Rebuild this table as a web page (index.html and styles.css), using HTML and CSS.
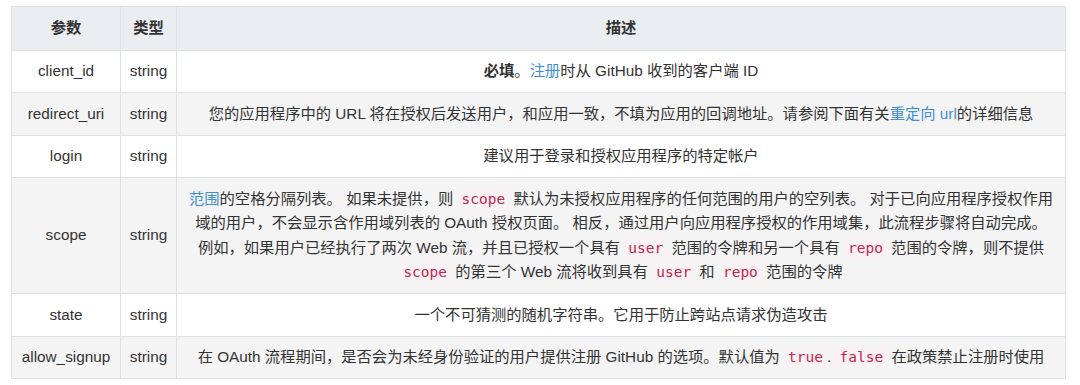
FILE: index.html
```html
<!DOCTYPE html>
<html lang="zh-CN">
<head>
<meta charset="utf-8">
<title>OAuth 参数</title>
<link rel="stylesheet" href="styles.css">
</head>
<body>
<table class="params">
  <thead>
    <tr>
      <th class="c-name">参数</th>
      <th class="c-type">类型</th>
      <th class="c-desc">描述</th>
    </tr>
  </thead>
  <tbody>
    <tr>
      <td>client_id</td>
      <td>string</td>
      <td><strong>必填</strong>。<a href="#">注册</a>时从 GitHub 收到的客户端 ID</td>
    </tr>
    <tr>
      <td>redirect_uri</td>
      <td>string</td>
      <td>您的应用程序中的 URL 将在授权后发送用户，和应用一致，不填为应用的回调地址。请参阅下面有关<a href="#">重定向 url</a>的详细信息</td>
    </tr>
    <tr>
      <td>login</td>
      <td>string</td>
      <td>建议用于登录和授权应用程序的特定帐户</td>
    </tr>
    <tr>
      <td>scope</td>
      <td>string</td>
      <td><a href="#">范围</a>的空格分隔列表。 如果未提供，则 <code>scope</code> 默认为未授权应用程序的任何范围的用户的空列表。 对于已向应用程序授权作用<br>域的用户，不会显示含作用域列表的 OAuth 授权页面。 相反，通过用户向应用程序授权的作用域集，此流程步骤将自动完成。<br>例如，如果用户已经执行了两次 Web 流，并且已授权一个具有 <code>user</code> 范围的令牌和另一个具有 <code>repo</code> 范围的令牌，则不提供<br><code>scope</code> 的第三个 Web 流将收到具有 <code>user</code> 和 <code>repo</code> 范围的令牌</td>
    </tr>
    <tr>
      <td>state</td>
      <td>string</td>
      <td>一个不可猜测的随机字符串。它用于防止跨站点请求伪造攻击</td>
    </tr>
    <tr>
      <td>allow_signup</td>
      <td>string</td>
      <td>在 OAuth 流程期间，是否会为未经身份验证的用户提供注册 GitHub 的选项。默认值为 <code>true</code>. <code>false</code> 在政策禁止注册时使用</td>
    </tr>
  </tbody>
</table>
</body>
</html>
```
FILE: styles.css
```css
html, body {
  margin: 0;
  padding: 0;
  background: #ffffff;
}

body {
  padding: 6px 15px 0 11px;
  font-family: "Liberation Sans", "Noto Sans CJK SC", sans-serif;
  font-size: 15.3px;
  color: #333333;
}

.params {
  width: 1055px;
  border-collapse: collapse;
  table-layout: fixed;
}

.params th,
.params td {
  border: 1px solid #dfe1e3;
  text-align: center;
  line-height: 24.5px;
  padding: 8.5px 6px;
  white-space: nowrap;
}

.params th {
  background: #ebeef0;
  font-weight: bold;
  padding-top: 9px;
  padding-bottom: 9px;
}

.c-name { width: 108px; }
.c-type { width: 55px; }

.params tbody tr:nth-child(even) td {
  background: #f4f4f4;
}

.params tbody tr:nth-child(odd) td {
  background: #ffffff;
}

.params th.c-name,
.params th.c-type,
.params td:nth-child(1),
.params td:nth-child(2) {
  padding-left: 0;
  padding-right: 0;
}

.params a {
  color: #3f8fd8;
  text-decoration: none;
}

.params strong {
  font-weight: bold;
}

.params code {
  font-family: "DejaVu Sans Mono", "Liberation Mono", monospace;
  font-size: 14.5px;
  line-height: 1;
  color: #c7254e;
  background: #f9f2f4;
  padding: 3px 4px;
  border-radius: 3px;
}
```
